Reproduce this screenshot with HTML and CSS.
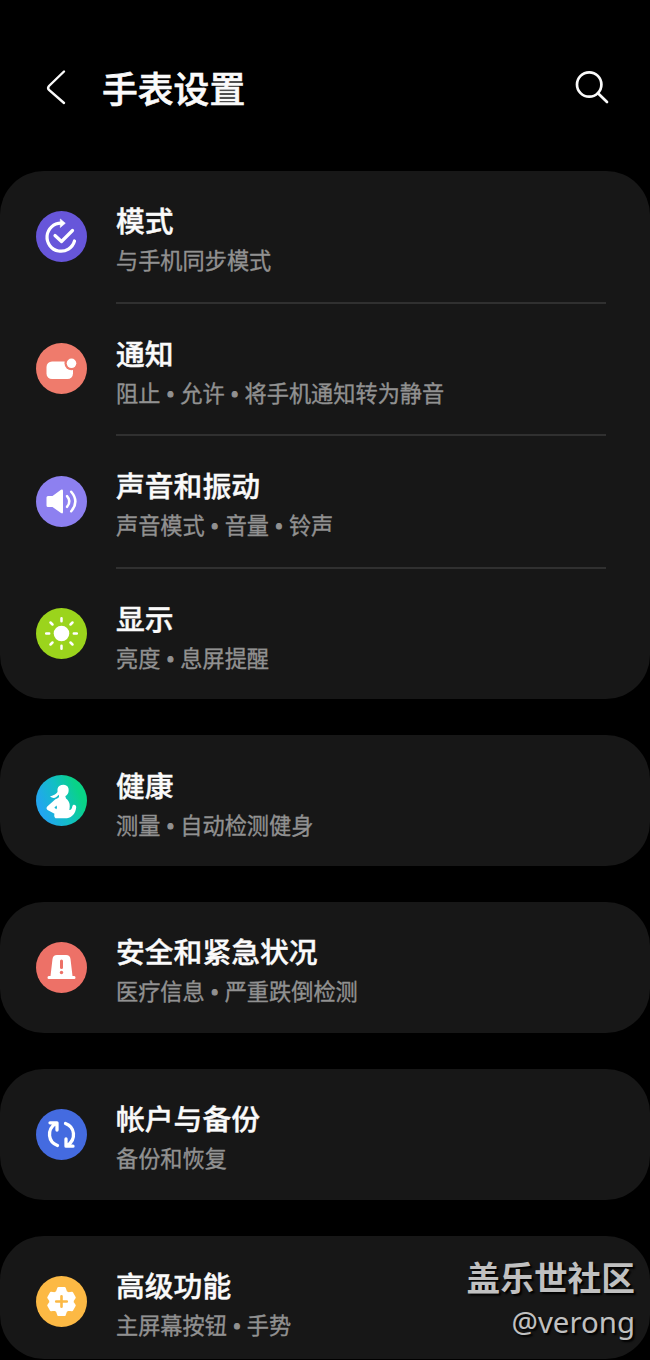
FILE: index.html
```
<!DOCTYPE html>
<html lang="zh-CN">
<head>
<meta charset="utf-8">
<title>手表设置</title>
<link rel="stylesheet" href="styles.css">
</head>
<body>
<div class="screen">
  <header class="topbar">
    <svg class="back" viewBox="0 0 24 40"><path d="M20 4.500 L5 19 Q3.200 21 5 23 L20 36"/></svg>
    <h1 class="heading">手表设置</h1>
    <svg class="search" viewBox="0 0 36 36"><circle cx="15.200" cy="15.500" r="12.200"/><path d="M24 24.300 L33 33"/></svg>
  </header>
  <main class="cards">
    <section class="card">
      <div class="row">
        <svg class="icon" viewBox="0 0 51 51"><circle cx="25.500" cy="25.500" r="25.500" fill="#6756da"/><g class="line"><path d="M25 12.200 A14 14 0 1 0 38.500 30" stroke-width="3.200"/><path d="M19 24.500 L25.500 30.500 L36.500 19.500" stroke-width="3.200"/></g><path d="M24.300 8 L29.300 12.200 L24.300 16.500 Z" fill="#fff" stroke="#fff" stroke-width=".6"/></svg>
        <div class="text"><h2 class="title">模式</h2><p class="sub">与手机同步模式</p></div>
      </div>
      <div class="row">
        <svg class="icon" viewBox="0 0 51 51"><circle cx="25.500" cy="25.500" r="25.500" fill="#ef7b6c"/><rect x="10.500" y="18.500" width="26.500" height="17.500" rx="5.500" fill="#fff"/><circle cx="35.500" cy="20.300" r="7" fill="#ef7b6c"/><circle cx="35.500" cy="20.300" r="4.800" fill="#fff"/></svg>
        <div class="text"><h2 class="title">通知</h2><p class="sub">阻止 <span class="dot">•</span> 允许 <span class="dot">•</span> 将手机通知转为静音</p></div>
      </div>
      <div class="row">
        <svg class="icon" viewBox="0 0 51 51"><circle cx="25.500" cy="25.500" r="25.500" fill="#8d80f0"/><path d="M10.500 21.500 Q10.500 20 12 20 H16.500 L25 13.800 Q27 13 27 15 V36 Q27 38.200 25 37 L16.500 31 H12 Q10.500 31 10.500 29.500 Z" fill="#fff"/><g class="line" stroke-width="2.500"><path d="M31 20.200 Q35.800 25.500 31 30.800"/><path d="M35.200 15.800 Q43.500 25.500 35.200 35.200"/></g></svg>
        <div class="text"><h2 class="title">声音和振动</h2><p class="sub">声音模式 <span class="dot">•</span> 音量 <span class="dot">•</span> 铃声</p></div>
      </div>
      <div class="row">
        <svg class="icon" viewBox="0 0 51 51"><circle cx="25.500" cy="25.500" r="25.500" fill="#9bd41c"/><circle cx="25.500" cy="25.500" r="7.800" fill="#fff"/><path class="line" stroke-width="2.500" d="M25.500 10.200v3M25.500 37.800v3M10.200 25.500h3M37.800 25.500h3M14.500 14.500l2 2M34.500 34.500l2 2M14.500 36.500l2-2M34.500 16.500l2-2"/></svg>
        <div class="text"><h2 class="title">显示</h2><p class="sub">亮度 <span class="dot">•</span> 息屏提醒</p></div>
      </div>
    </section>
    <section class="card">
      <div class="row">
        <svg class="icon" viewBox="0 0 51 51"><defs><linearGradient id="health" x1="0" y1=".7" x2="1" y2=".3"><stop offset=".1" stop-color="#22a6ef"/><stop offset=".5" stop-color="#12bfc4"/><stop offset=".85" stop-color="#09d387"/></linearGradient></defs><circle cx="25.500" cy="25.500" r="25.500" fill="url(#health)"/><path fill="#fff" d="M21.500 14 C22.500 8.800 31.500 8.300 32.500 13.500 C33.200 17.500 31.500 20.300 29.300 21 L30 23.500 C33.500 26 34.500 30 33.300 35 C34.800 35.500 36 33.500 36.300 31.500 C36.800 28.800 40.500 29.500 40.200 32.500 C39.700 37.500 36.500 42.500 31 43.300 H19.500 C18 42 18 40 18.500 38.800 L11.500 35 Q9.500 33.300 11.500 31.300 L18.500 25 C20 23.600 23.500 23.500 23 20.800 L22.500 19.800 C20.500 23.200 17 24 14 21.500 C18 20.500 20.500 18.500 21.500 17 Z"/><path d="M20.500 30.500 L18.300 32.700 L20.500 34.300 Q21.500 32 20.500 30.500 Z" fill="#16b7d3"/></svg>
        <div class="text"><h2 class="title">健康</h2><p class="sub">测量 <span class="dot">•</span> 自动检测健身</p></div>
      </div>
    </section>
    <section class="card">
      <div class="row">
        <svg class="icon" viewBox="0 0 51 51"><circle cx="25.500" cy="25.500" r="25.500" fill="#ed7167"/><path fill="#fff" d="M21 13 H30 Q34 13 34.500 17 L36.500 34 H38.200 Q39.500 34 39.500 35.500 T38.200 37 H12.800 Q11.500 37 11.500 35.500 T12.800 34 H14.500 L16.500 17 Q17 13 21 13 Z"/><path d="M25.500 19 V25.500" stroke="#ed7167" stroke-width="3" stroke-linecap="round"/><circle cx="25.500" cy="30.500" r="1.700" fill="#ed7167"/></svg>
        <div class="text"><h2 class="title">安全和紧急状况</h2><p class="sub">医疗信息 <span class="dot">•</span> 严重跌倒检测</p></div>
      </div>
    </section>
    <section class="card">
      <div class="row">
        <svg class="icon" viewBox="0 0 51 51"><circle cx="25.500" cy="25.500" r="25.500" fill="#446be0"/><g class="line" stroke-width="3.300"><path d="M21.500 36.500 C12 33 10.500 21 19.500 14.500 M14 13.800 H21 V21"/><path d="M29.500 14.500 C39 18 40.500 30 31.500 36.500 M37 37.200 H30 V30"/></g></svg>
        <div class="text"><h2 class="title">帐户与备份</h2><p class="sub">备份和恢复</p></div>
      </div>
    </section>
    <section class="card card-last">
      <div class="row">
        <svg class="icon" viewBox="0 0 51 51"><circle cx="25.500" cy="25.500" r="25.500" fill="#fcb944"/><path fill="#fff" stroke="#fff" stroke-width="2.500" stroke-linejoin="round" d="M22.500 12.200 H28.500 L29.800 16 L32.500 17.500 L36 17 L38.500 21.500 L36.500 24.500 V26.500 L38.500 29.500 L36 34 L32.500 33.500 L29.800 35 L28.500 38.800 H22.500 L21.200 35 L18.500 33.500 L15 34 L12.500 29.500 L14.500 26.500 V24.500 L12.500 21.500 L15 17 L18.500 17.500 L21.200 16 Z"/><path d="M25.500 20.200 V30.800 M20.200 25.500 H30.800" stroke="#fcb944" stroke-width="2.600" stroke-linecap="round"/></svg>
        <div class="text"><h2 class="title">高级功能</h2><p class="sub">主屏幕按钮 <span class="dot">•</span> 手势</p></div>
      </div>
    </section>
  </main>
  <div class="watermark"><div class="community">盖乐世社区</div><div class="author">@verong</div></div>
</div>
</body>
</html>
```
FILE: styles.css
```
* { box-sizing: border-box; }
body { margin: 0; background: #000; }
.screen {
  position: relative;
  width: 650px;
  height: 1360px;
  overflow: hidden;
  background: #000;
  color: #fafafa;
  font-family: "Noto Sans", "Noto Sans CJK SC", sans-serif;
}
.topbar {
  display: flex;
  align-items: center;
  height: 171px;
  padding: 2px 40px 0 44px;
}
.back, .search { fill: none; stroke: #fafafa; stroke-linecap: round; }
.back { width: 24px; height: 40px; stroke-width: 2.4; }
.search { width: 36px; height: 36px; stroke-width: 2.7; }
.heading {
  flex: 1;
  margin: 0 0 0 34px;
  padding-top: 5px;
  font-size: 35.8px;
  line-height: 48px;
  font-weight: 500;
  -webkit-text-stroke: 0.6px currentColor;
}
.cards { display: flex; flex-direction: column; gap: 36px; }
.card { background: #171717; border-radius: 44px; }
.card-last { height: 123.5px; }
.row {
  position: relative;
  display: flex;
  align-items: center;
  height: 130.8px;
  padding-left: 36px;
}
.row + .row { margin-top: 1.7px; }
.row + .row::before {
  content: "";
  position: absolute;
  top: -1.8px;
  left: 116px;
  right: 44px;
  height: 2px;
  background: #303030;
}
.icon { width: 51px; height: 51px; }
.line { fill: none; stroke: #fff; stroke-linecap: round; stroke-linejoin: round; }
.text { margin-left: 29px; padding-top: 7px; }
.title, .sub { margin: 0; white-space: nowrap; }
.title { font-size: 28.8px; line-height: 41px; font-weight: 500; -webkit-text-stroke: 0.4px currentColor; }
.sub { margin-top: 2px; font-size: 22.2px; line-height: 36px; font-weight: 400; color: #919191; -webkit-text-stroke: 0.35px currentColor; }
.dot { -webkit-text-stroke: 1.2px currentColor; }
.watermark {
  position: absolute;
  right: 15px;
  bottom: 16px;
  color: #c0c0c0;
  text-align: right;
  text-shadow: 2px 2px 2px #000;
}
.community { font-size: 33.7px; line-height: 43px; font-weight: 700; }
.author { font-size: 29.4px; line-height: 44px; }
```
